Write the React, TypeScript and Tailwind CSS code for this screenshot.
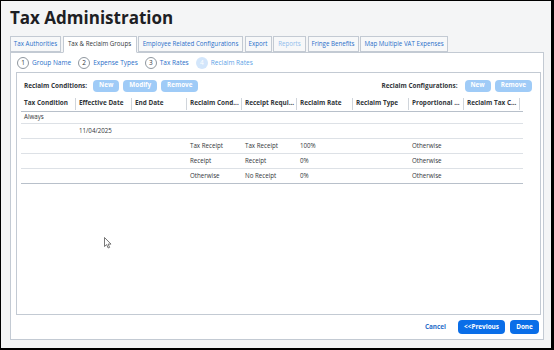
const tabs = [
  { label: "Tax Authorities", w: "w-[51px]" },
  { label: "Tax & Reclaim Groups", w: "w-[74px]", active: true },
  { label: "Employee Related Configurations", w: "w-[105px]" },
  { label: "Export", w: "w-[27px]" },
  { label: "Reports", w: "w-[33px]", disabled: true },
  { label: "Fringe Benefits", w: "w-[51px]" },
  { label: "Map Multiple VAT Expenses", w: "w-[88px]" },
];

const steps = [
  { n: "1", label: "Group Name" },
  { n: "2", label: "Expense Types" },
  { n: "3", label: "Tax Rates" },
  { n: "4", label: "Reclaim Rates", current: true },
];

const columns = [
  "Tax Condition",
  "Effective Date",
  "End Date",
  "Reclaim Cond...",
  "Receipt Requi...",
  "Reclaim Rate",
  "Reclaim Type",
  "Proportional ...",
  "Reclaim Tax C...",
];

const rows: string[][] = [
  ["Always", "", "", "", "", "", "", "", ""],
  ["", "11/04/2025", "", "", "", "", "", "", ""],
  ["", "", "", "Tax Receipt", "Tax Receipt", "100%", "", "Otherwise", ""],
  ["", "", "", "Receipt", "Receipt", "0%", "", "Otherwise", ""],
  ["", "", "", "Otherwise", "No Receipt", "0%", "", "Otherwise", ""],
];

const DisabledButton = ({ children }: { children: React.ReactNode }) => (
  <button className="h-[12px] rounded-[4px] bg-[#9fcbf7] px-[6px] text-[6.3px] font-bold leading-none text-white">
    {children}
  </button>
);

const App = () => {
  return (
    <div
      className="relative h-[350px] w-[554px] overflow-hidden border-t border-l border-r-[3px] border-b-2 border-black bg-[#f4f5f6] text-[#32363a]"
      style={{ fontFamily: '"Open Sans", "Liberation Sans", sans-serif' }}
    >
      {/* TITLE */}
      <h1 className="h-[35px] pl-[9px] pt-[5px] text-[17px] font-bold leading-[24px] text-[#1d2024]">
        Tax Administration
      </h1>

      {/* TABS */}
      <div className="ml-[9px] flex h-[16px] items-end gap-[1.5px]">
        {tabs.map((t) => (
          <div
            key={t.label}
            className={`${t.w} flex h-[16px] items-center justify-center whitespace-nowrap border border-[#c3cad3] text-[6.2px] leading-none ${
              t.active
                ? "relative z-10 -mb-px h-[17px] border-b-white bg-white text-[#32363a]"
                : t.disabled
                  ? "bg-[#f7f8f9] text-[#8fbcec]"
                  : "bg-[#f7f8f9] text-[#2a6fc9]"
            }`}
          >
            {t.label}
          </div>
        ))}
      </div>

      {/* OUTER PANEL */}
      <div className="ml-[9px] flex h-[288px] w-[534px] flex-col border border-[#c3cad3] bg-white">
        {/* STEPS */}
        <div className="flex h-[19px] items-center gap-[7px] pl-[6px] pt-[1px]">
          {steps.map((s) => (
            <div key={s.n} className="flex items-center gap-[3px]">
              <span
                className={`flex h-[12px] w-[12px] items-center justify-center rounded-full text-[6.5px] leading-none ${
                  s.current
                    ? "bg-[#d3e6fb] text-white"
                    : "border border-[#8f979f] text-[#32363a]"
                }`}
              >
                {s.n}
              </span>
              <span
                className={`text-[6.5px] leading-none ${
                  s.current ? "text-[#5d9fe6]" : "text-[#2a6fc9]"
                }`}
              >
                {s.label}
              </span>
            </div>
          ))}
        </div>

        {/* INNER PANEL */}
        <div className="ml-[5px] h-[243px] w-[525px] border border-[#c3cad3] bg-white">
          {/* TOOLBAR */}
          <div className="flex h-[23px] items-center justify-between pl-[7px] pr-[8px] pt-[2px]">
            <div className="flex items-center gap-[4px]">
              <span className="mr-[2px] text-[6.4px] font-bold text-[#32363a]">
                Reclaim Conditions:
              </span>
              <DisabledButton>New</DisabledButton>
              <DisabledButton>Modify</DisabledButton>
              <DisabledButton>Remove</DisabledButton>
            </div>
            <div className="flex items-center gap-[4px]">
              <span className="mr-[3px] text-[6.4px] font-bold text-[#32363a]">
                Reclaim Configurations:
              </span>
              <DisabledButton>New</DisabledButton>
              <DisabledButton>Remove</DisabledButton>
            </div>
          </div>

          {/* TABLE */}
          <div className="ml-[4px] w-[502px]">
            <div className="grid h-[16px] grid-cols-[55px_56px_55px_55px_55px_56px_56px_55px_56px_3px] items-center border-b border-[#b8c0ca]">
              {columns.map((c) => (
                <div
                  key={c}
                  className="flex h-[12px] items-center whitespace-nowrap border-r border-[#d0d5db] pl-[3px] text-[6.4px] font-bold leading-none text-[#32363a]"
                >
                  {c}
                </div>
              ))}
              <div />
            </div>
            {rows.map((r, i) => (
              <div
                key={i}
                className={`grid grid-cols-[55px_56px_55px_55px_55px_56px_56px_55px_56px_3px] items-center border-b ${
                  i === 0 ? "h-[12px]" : "h-[15px]"
                } ${i === rows.length - 1 ? "border-[#b8c0ca]" : "border-[#dde1e6]"}`}
              >
                {r.map((cell, j) => (
                  <div
                    key={j}
                    className="whitespace-nowrap pl-[3px] text-[6.2px] leading-none text-[#32363a]"
                  >
                    {cell}
                  </div>
                ))}
                <div />
              </div>
            ))}
          </div>
        </div>

        {/* FOOTER */}
        <div className="flex flex-1 items-center justify-end gap-[5px] pr-[4px]">
          <button className="mr-[7px] text-[6.4px] font-bold text-[#2a6fc9]">
            Cancel
          </button>
          <button className="h-[14px] rounded-[4px] bg-[#0a6ee8] px-[6px] text-[6.4px] font-bold leading-none text-white">
            &lt;&lt;Previous
          </button>
          <button className="h-[14px] w-[29px] rounded-[4px] bg-[#0a6ee8] text-[6.4px] font-bold leading-none text-white">
            Done
          </button>
        </div>
      </div>

      {/* MOUSE CURSOR */}
      <svg
        className="absolute left-[103px] top-[236px]"
        width="8"
        height="12"
        viewBox="0 0 8 12"
      >
        <path
          d="M0.5 0.5 L0.5 9.5 L2.6 7.6 L4.2 11 L5.6 10.4 L4.1 7.1 L7 7.1 Z"
          fill="white"
          stroke="#555"
          strokeWidth="0.8"
          strokeLinejoin="round"
        />
      </svg>
    </div>
  );
};

export default App;
